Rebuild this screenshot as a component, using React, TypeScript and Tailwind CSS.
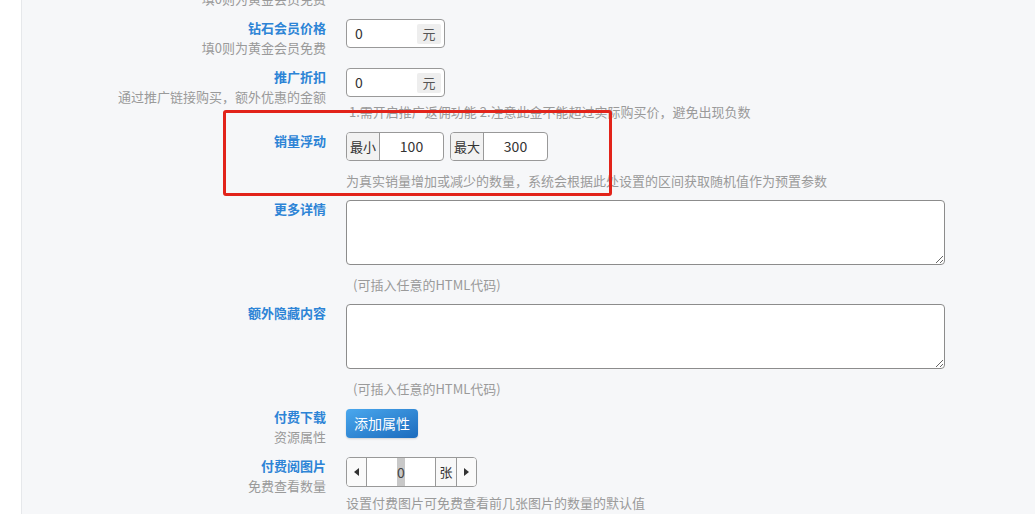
import React from "react";

const font = { fontFamily: '"Microsoft YaHei", "Noto Sans CJK SC", "Liberation Sans", sans-serif' };

const Label = ({ title, sub }: { title: string; sub?: string }) => (
  <div className="w-[304px] shrink-0 text-right text-[13px] leading-[20px]">
    <div className="font-bold text-[#2d84d6]">{title}</div>
    {sub && <div className="text-[#9a9a9a]">{sub}</div>}
  </div>
);

const Hint = ({ children, className = "" }: { children: React.ReactNode; className?: string }) => (
  <div className={`text-[13px] leading-[20px] text-[#9a9a9a] whitespace-nowrap ${className}`}>{children}</div>
);

const MoneyInput = ({ value }: { value: string }) => (
  <div className="mt-px flex h-[29px] w-[99px] items-center rounded-[4px] border border-[#999] bg-white pl-[8px] pr-[3px]">
    <span className="flex-1 text-[14px] text-[#333]">{value}</span>
    <span className="flex h-[20px] w-[24px] items-center justify-center rounded-[2px] bg-[#eeeeee] text-[13px] text-[#555]">
      元
    </span>
  </div>
);

const RangeInput = ({ addon, value }: { addon: string; value: string }) => (
  <div className="flex h-[29px] overflow-hidden rounded-[4px] border border-[#999] bg-white">
    <span className="flex w-[33px] items-center justify-center border-r border-[#999] bg-[#f2f2f2] text-[13px] text-[#333]">
      {addon}
    </span>
    <span className="flex w-[63px] items-center justify-center text-[14px] text-[#333]">{value}</span>
  </div>
);

const Area = () => (
  <textarea
    className="mt-px block h-[65px] w-[599px] resize-y rounded-[4px] border border-[#8c8c8c] bg-white outline-none"
    defaultValue=""
  />
);

export default function App() {
  return (
    <div className="relative flex h-[514px] w-[1035px] overflow-hidden bg-white" style={font}>
      <div className="w-[21px] shrink-0 bg-white" />
      <div className="flex flex-1 flex-col border-l border-[#e6e8eb] bg-[#f6f7f9]">
        {/* 黄金会员价格 (scrolled off the top) */}
        <div className="mt-[-31px] flex gap-[20px]">
          <Label title="黄金会员价格" sub="填0则为黄金会员免费" />
          <MoneyInput value="0" />
        </div>

        <div className="mt-[9px] flex gap-[20px]">
          <Label title="钻石会员价格" sub="填0则为黄金会员免费" />
          <MoneyInput value="0" />
        </div>

        <div className="mt-[9px] flex gap-[20px]">
          <Label title="推广折扣" sub="通过推广链接购买，额外优惠的金额" />
          <div>
            <MoneyInput value="0" />
            <Hint className="mt-[5px] pl-[3px]">1.需开启推广返佣功能 2.注意此金不能超过实际购买价，避免出现负数</Hint>
          </div>
        </div>

        <div className="mt-[9px] flex gap-[20px]">
          <Label title="销量浮动" />
          <div>
            <div className="mt-px flex gap-[6px]">
              <RangeInput addon="最小" value="100" />
              <RangeInput addon="最大" value="300" />
            </div>
            <Hint className="mt-[10px]">为真实销量增加或减少的数量，系统会根据此处设置的区间获取随机值作为预置参数</Hint>
          </div>
        </div>

        <div className="mt-[8px] flex gap-[20px]">
          <Label title="更多详情" />
          <div>
            <Area />
            <Hint className="mt-[10px] pl-[7px]">(可插入任意的HTML代码)</Hint>
          </div>
        </div>

        <div className="mt-[8px] flex gap-[20px]">
          <Label title="额外隐藏内容" />
          <div>
            <Area />
            <Hint className="mt-[10px] pl-[7px]">(可插入任意的HTML代码)</Hint>
          </div>
        </div>

        <div className="mt-[8px] flex gap-[20px]">
          <Label title="付费下载" sub="资源属性" />
          <button className="mt-[2px] h-[29px] w-[72px] rounded-[4px] bg-gradient-to-br from-[#4aa8ee] to-[#1b6bbd] text-[14px] text-white shadow-[0_1px_2px_rgba(0,0,0,0.15)]">
            添加属性
          </button>
        </div>

        <div className="mt-[9px] flex gap-[20px]">
          <Label title="付费阅图片" sub="免费查看数量" />
          <div>
            <div className="mt-px flex h-[30px] w-[131px] overflow-hidden rounded-[4px] border border-[#999] bg-white">
              <span className="flex w-[20px] items-center justify-center border-r border-[#999] bg-[#fafafa]">
                <svg width="5" height="8" viewBox="0 0 5 8">
                  <path d="M5 0 L0 4 L5 8 Z" fill="#333" />
                </svg>
              </span>
              <span className="flex flex-1 items-stretch justify-center">
                <span className="flex w-[8px] items-center justify-center bg-[#c8c8c8] text-[14px] text-[#444]">0</span>
              </span>
              <span className="flex w-[22px] items-center justify-center border-x border-[#999] bg-[#f8f8f8] text-[13px] text-[#333]">
                张
              </span>
              <span className="flex w-[19px] items-center justify-center bg-[#fafafa]">
                <svg width="5" height="8" viewBox="0 0 5 8">
                  <path d="M0 0 L5 4 L0 8 Z" fill="#333" />
                </svg>
              </span>
            </div>
            <Hint className="mt-[6px]">设置付费图片可免费查看前几张图片的数量的默认值</Hint>
          </div>
        </div>
      </div>

      {/* highlight frame around 销量浮动 */}
      <div className="pointer-events-none absolute left-[223px] top-[110px] h-[86px] w-[389px] rounded-[3px] border-[3px] border-[#e2231a]" />
    </div>
  );
}
